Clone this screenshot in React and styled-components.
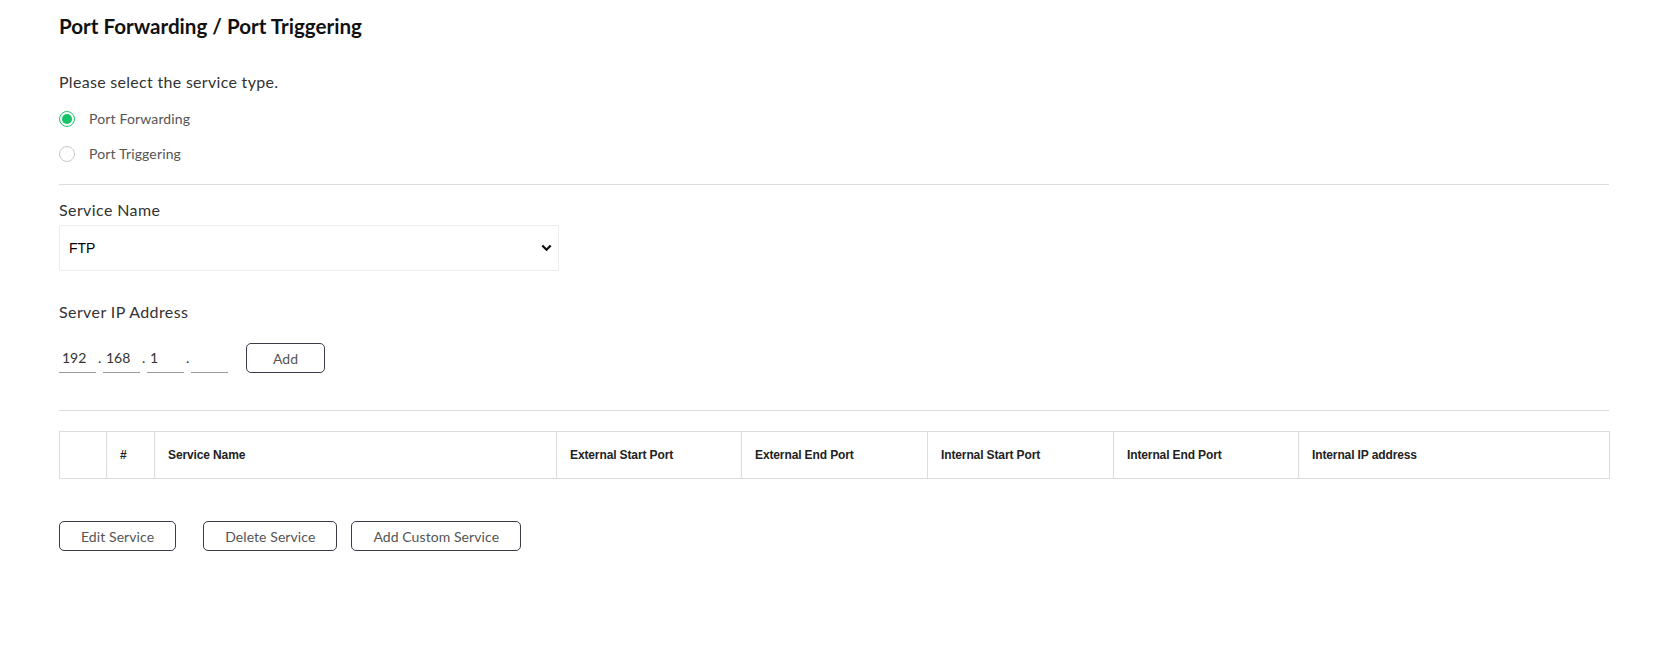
import React, { useState } from "react";
import styled, { createGlobalStyle } from "styled-components";

const Global = createGlobalStyle`
  html, body { margin: 0; padding: 0; background: #fff; }
  body { font-family: Lato, "Noto Sans", sans-serif; color: #333; }
  * { box-sizing: border-box; }
`;

const Page = styled.div`
  width: 1550px;
  margin-left: 59px;
  padding-top: 14px;
  padding-bottom: 60px;
`;

const Title = styled.h1`
  margin: 0;
  font-size: 20.6px;
  line-height: 24px;
  font-weight: 700;
  color: #111;
`;

const Prompt = styled.p`
  margin: 34px 0 0;
  font-size: 16px;
  letter-spacing: 0.3px;
  line-height: 20px;
  color: #333;
`;

const RadioGroup = styled.div`
  display: flex;
  flex-direction: column;
  gap: 15px;
  margin-top: 17px;
`;

const RadioRow = styled.label`
  display: flex;
  align-items: center;
  gap: 14px;
  height: 20px;
  font-size: 14px;
  letter-spacing: 0.15px;
  line-height: 20px;
  color: #555;
  cursor: pointer;
  input { display: none; }
`;

const RadioDot = styled.span`
  width: 16px;
  height: 16px;
  border-radius: 50%;
  border: ${(p) => (p.$checked ? "1.5px solid #22c46f" : "1px solid #c9c9c9")};
  display: flex;
  align-items: center;
  justify-content: center;
  flex: none;
  &::after {
    content: "";
    width: 10px;
    height: 10px;
    border-radius: 50%;
    background: ${(p) => (p.$checked ? "#12c367" : "transparent")};
  }
`;

const Divider = styled.hr`
  margin: ${(p) => p.$top}px 0 0;
  border: 0;
  height: 1px;
  background: #dcdcdc;
`;

const FieldLabel = styled.div`
  margin-top: ${(p) => p.$top}px;
  font-size: 16px;
  letter-spacing: 0.4px;
  line-height: 20px;
  color: #333;
`;

const SelectWrap = styled.div`
  position: relative;
  width: 500px;
  height: 46px;
  margin-top: 5px;
`;

const Select = styled.select`
  appearance: none;
  -webkit-appearance: none;
  width: 100%;
  height: 100%;
  border: 1px solid #ececec;
  border-radius: 2px;
  background: #fff;
  padding: 0 30px 0 9px;
  font-family: "Liberation Sans", Arial, sans-serif;
  font-size: 14px;
  color: #000;
  outline: none;
`;

const Chevron = styled.svg`
  position: absolute;
  right: 7px;
  top: 19px;
  pointer-events: none;
`;

const IpRow = styled.div`
  display: flex;
  align-items: flex-end;
  height: 30px;
  margin-top: 21px;
`;

const Octet = styled.input`
  width: 37px;
  height: 30px;
  border: 0;
  border-bottom: 1px solid #9a9a9a;
  padding: 0 0 1px 3px;
  font-family: Lato, sans-serif;
  font-size: 14px;
  color: #333;
  outline: none;
  background: transparent;
`;

const Dot = styled.span`
  width: 7px;
  padding-left: 2px;
  font-size: 14px;
  line-height: 20px;
  color: #333;
  margin-bottom: 5px;
`;

const Button = styled.button`
  height: 30px;
  min-width: ${(p) => p.$minWidth || 0}px;
  padding: 0 21px;
  border: 1px solid #3b3b48;
  border-radius: 5px;
  background: #fff;
  font-family: Lato, sans-serif;
  font-size: 14px;
  letter-spacing: 0.08px;
  color: #555;
  cursor: pointer;
  margin-left: ${(p) => p.$left || 0}px;
  margin-right: ${(p) => p.$right || 0}px;
`;

const Table = styled.table`
  margin-top: 20px;
  width: 1550px;
  border-collapse: collapse;
  table-layout: fixed;
`;

const Th = styled.th`
  height: 47px;
  border: 1px solid #dcdcdc;
  padding: 0 14px 0 13px;
  text-align: left;
  font-family: "Liberation Sans", Arial, sans-serif;
  font-size: 12px;
  letter-spacing: -0.12px;
  font-weight: 700;
  color: #222;
  white-space: nowrap;
`;

const Actions = styled.div`
  display: flex;
  gap: 14px;
  margin-top: 42px;
`;

const columns = [
  { label: "", w: 47 },
  { label: "#", w: 48 },
  { label: "Service Name", w: 402 },
  { label: "External Start Port", w: 185 },
  { label: "External End Port", w: 186 },
  { label: "Internal Start Port", w: 186 },
  { label: "Internal End Port", w: 185 },
  { label: "Internal IP address", w: 311 },
];

export default function App() {
  const [type, setType] = useState("fwd");
  const [service, setService] = useState("FTP");
  const octets = ["192", "168", "1", ""];
  return (
    <>
      <Global />
      <Page>
        <Title>Port Forwarding / Port Triggering</Title>
        <Prompt>Please select the service type.</Prompt>
        <RadioGroup>
          <RadioRow>
            <input type="radio" checked={type === "fwd"} onChange={() => setType("fwd")} />
            <RadioDot $checked={type === "fwd"} />
            Port Forwarding
          </RadioRow>
          <RadioRow>
            <input type="radio" checked={type === "trg"} onChange={() => setType("trg")} />
            <RadioDot $checked={type === "trg"} />
            Port Triggering
          </RadioRow>
        </RadioGroup>
        <Divider $top={20} />
        <FieldLabel $top={15}>Service Name</FieldLabel>
        <SelectWrap>
          <Select value={service} onChange={(e) => setService(e.target.value)}>
            <option>FTP</option>
            <option>HTTP</option>
            <option>HTTPS</option>
            <option>SSH</option>
            <option>Telnet</option>
          </Select>
          <Chevron width="11" height="8" viewBox="0 0 11 8">
            <path d="M1.3 1.5 L5.5 5.7 L9.7 1.5" fill="none" stroke="#111" strokeWidth="2.3" />
          </Chevron>
        </SelectWrap>
        <FieldLabel $top={31}>Server IP Address</FieldLabel>
        <IpRow>
          {octets.map((o, i) => (
            <React.Fragment key={i}>
              <Octet defaultValue={o} maxLength={3} />
              {i < 3 && <Dot>.</Dot>}
            </React.Fragment>
          ))}
          <Button $left={18} $minWidth={79}>Add</Button>
        </IpRow>
        <Divider $top={37} />
        <Table>
          <colgroup>
            {columns.map((c, i) => (
              <col key={i} style={{ width: c.w }} />
            ))}
          </colgroup>
          <thead>
            <tr>
              {columns.map((c, i) => (
                <Th key={i}>{c.label}</Th>
              ))}
            </tr>
          </thead>
        </Table>
        <Actions>
          <Button $right={13}>Edit Service</Button>
          <Button>Delete Service</Button>
          <Button>Add Custom Service</Button>
        </Actions>
      </Page>
    </>
  );
}
